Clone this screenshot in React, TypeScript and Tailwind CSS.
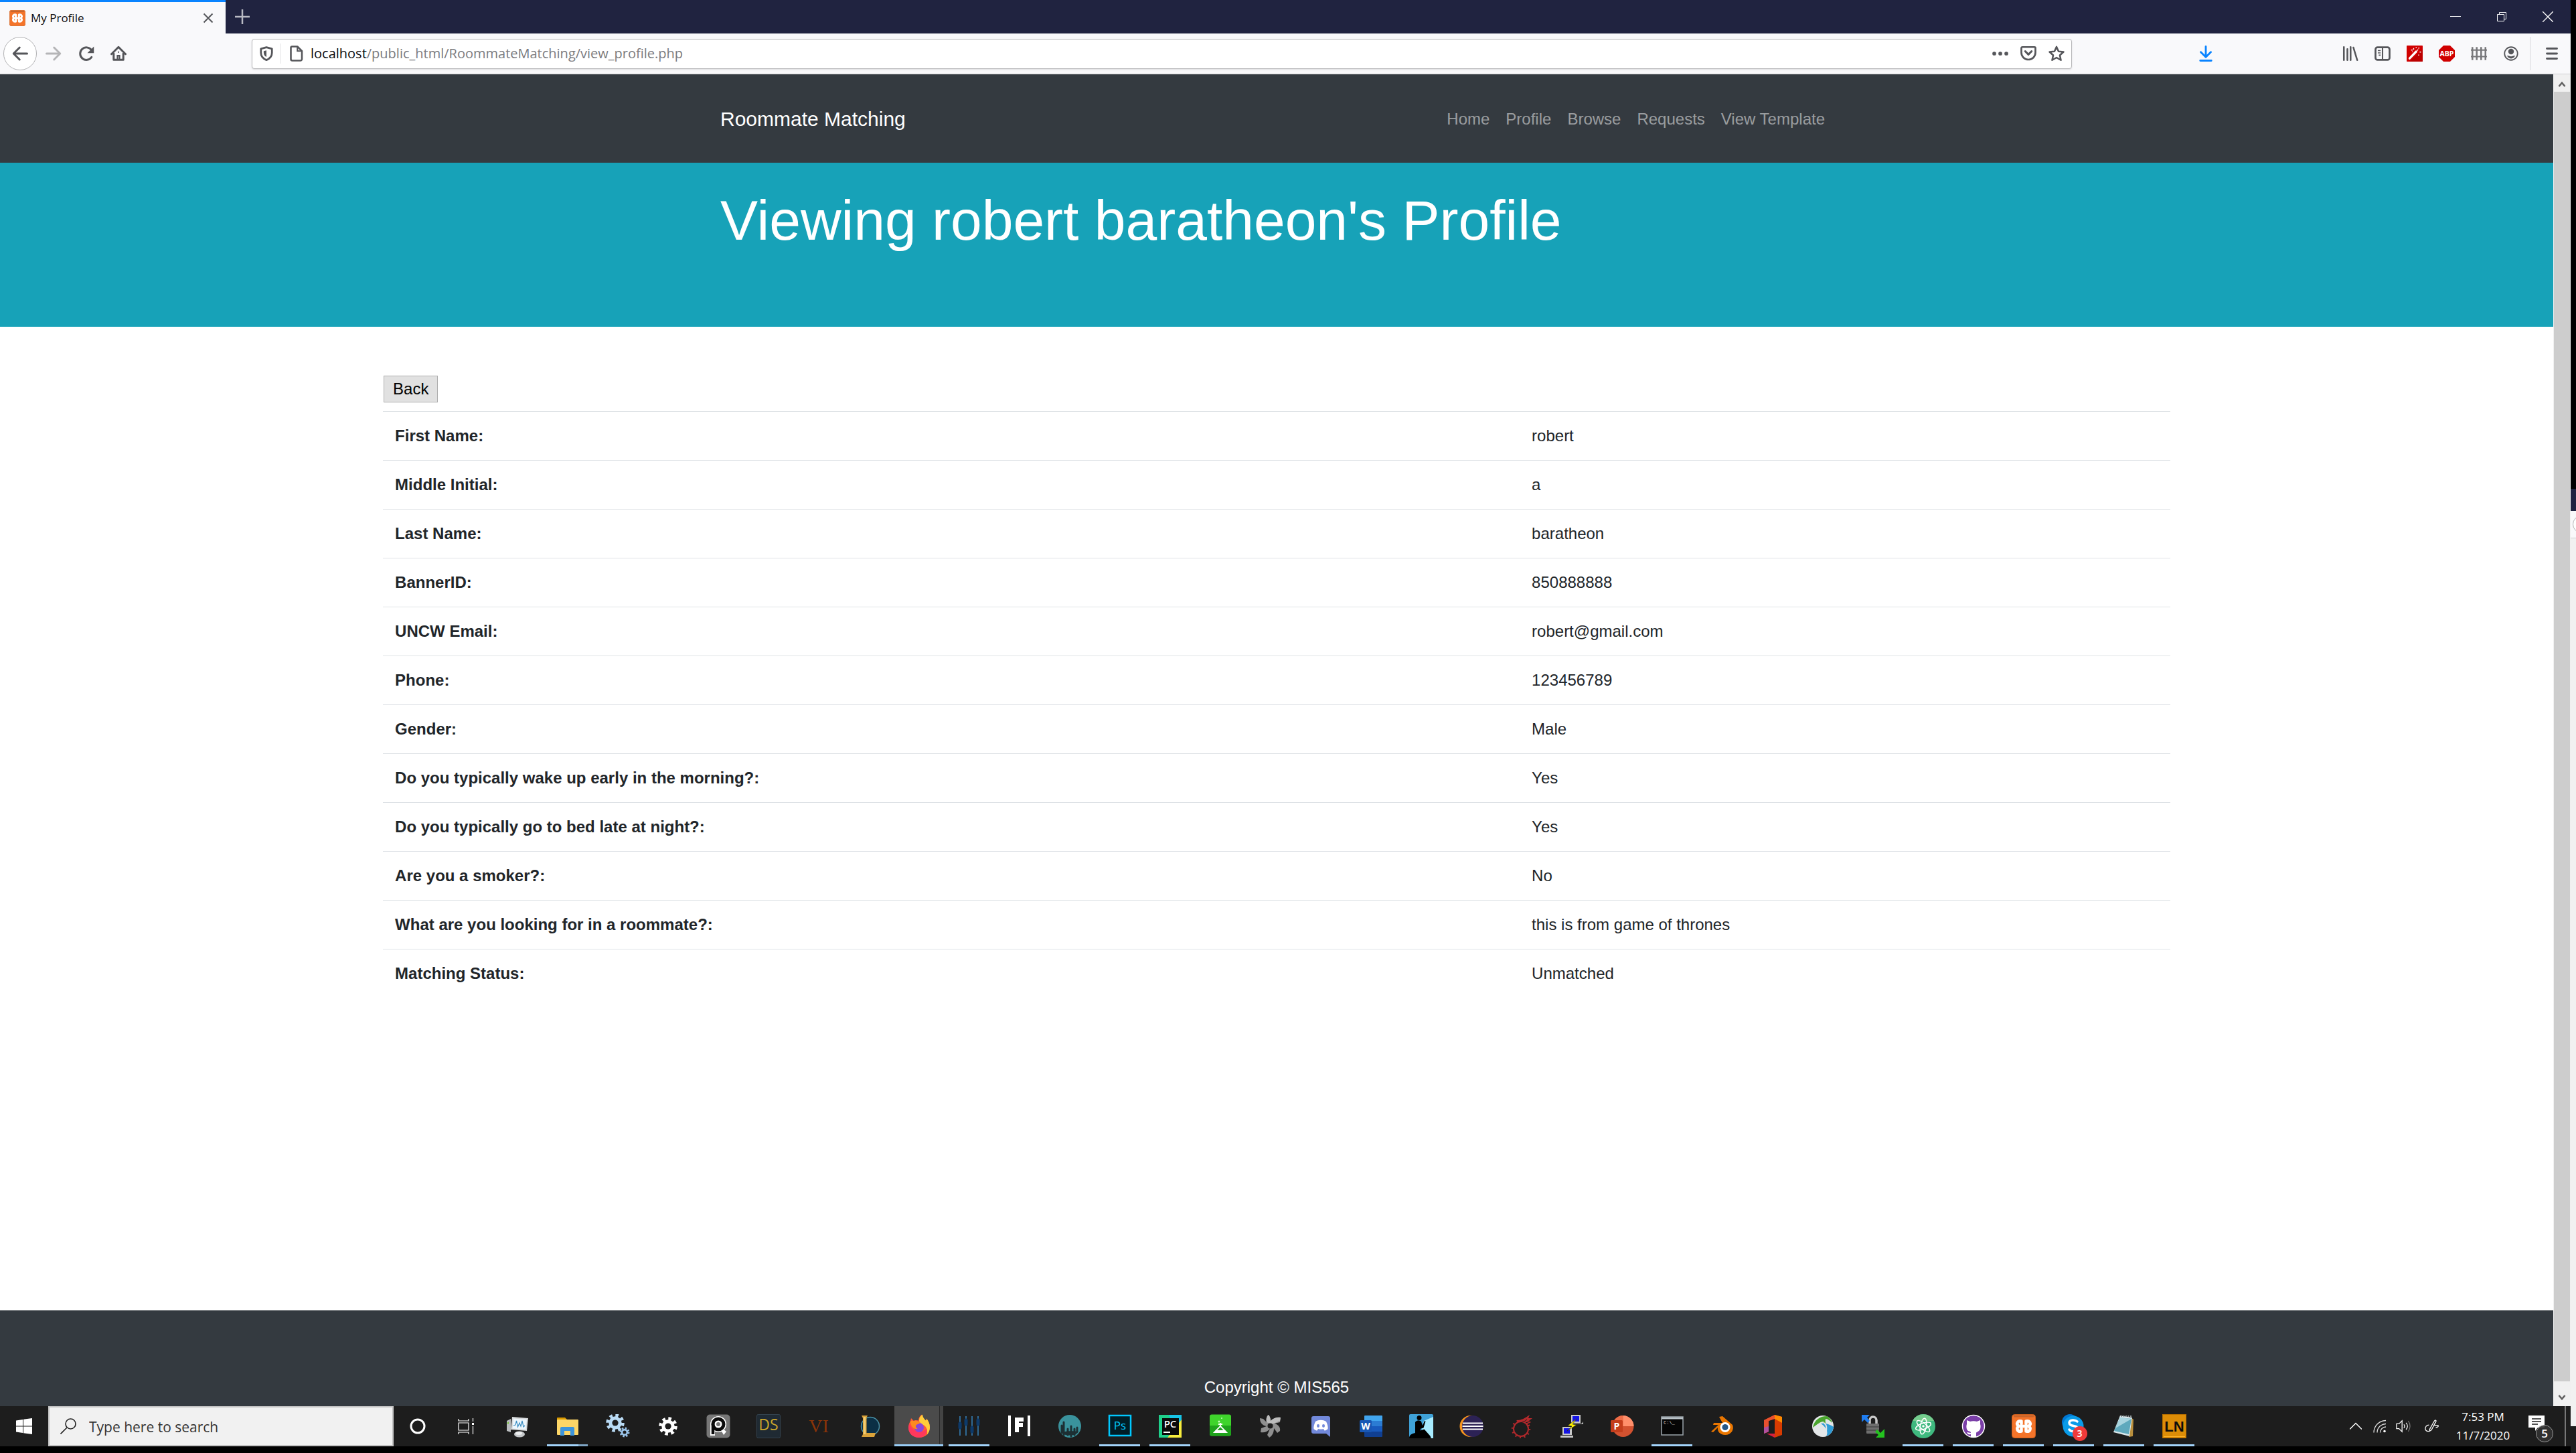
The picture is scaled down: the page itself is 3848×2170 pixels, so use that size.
import React from "react";
import type { ReactNode } from "react";

const ink = "#55565a";

/* ---------- browser icons ---------- */

function Svg({ children, size = "size-6", box = "0 0 16 16" }: { children: ReactNode; size?: string; box?: string }) {
  return (
    <svg viewBox={box} className={`${size} shrink-0`} fill="none" aria-hidden="true">
      {children}
    </svg>
  );
}

function XamppLogo({ size = "size-6" }: { size?: string }) {
  return (
    <Svg size={size} box="0 0 36 36">
      <rect x="0.5" y="0.5" width="35" height="35" rx="4" fill="#f4742a" stroke="#c95d1c" />
      <rect x="3" y="1.500" width="30" height="3" rx="1" fill="#c9652b" />
      <path
        d="M14.500 10.500c-5.500-1.500-8.500 4-4 7.500-4.500 3.500-1.500 9 4 7.500M21.500 10.500c5.500-1.500 8.500 4 4 7.500 4.500 3.500 1.500 9-4 7.500M14.500 10.500v4M21.500 10.500v4M14.500 21.500v4M21.500 21.500v4M11 18h14"
        stroke="#fff"
        strokeWidth="4.500"
        strokeLinecap="round"
        strokeLinejoin="round"
      />
    </Svg>
  );
}

const BackIcon = () => (
  <Svg>
    <path d="M15 8H2M7.500 2 1.500 8l6 6" stroke={ink} strokeWidth="2" strokeLinecap="round" strokeLinejoin="round" />
  </Svg>
);
const ForwardIcon = () => (
  <Svg>
    <path d="M1 8h13M8.500 2l6 6-6 6" stroke="#b5b5b7" strokeWidth="2" strokeLinecap="round" strokeLinejoin="round" />
  </Svg>
);
const ReloadIcon = () => (
  <Svg>
    <path d="M13.200 11.500A6.200 6.200 0 1 1 13 4.400" stroke={ink} strokeWidth="2" strokeLinecap="round" />
    <path d="M15.500 1v6.500H9z" fill={ink} />
  </Svg>
);
const HomeIcon = () => (
  <Svg>
    <path d="M1 8.500 8 1.500l7 7M3.200 8v6.200h9.600V8" stroke={ink} strokeWidth="2" strokeLinecap="round" strokeLinejoin="round" />
    <path d="M7 14v-4h2v4" stroke={ink} strokeWidth="1.500" />
    <path d="M8 6.500h.01" stroke={ink} strokeWidth="1.500" strokeLinecap="round" />
  </Svg>
);
const ShieldIcon = () => (
  <Svg size="size-[22px]">
    <path d="M8 1.200 14 2.800V7c0 4-2.500 6.500-6 8-3.500-1.500-6-4-6-8V2.800z" stroke={ink} strokeWidth="2" strokeLinejoin="round" />
    <path d="M8 4.500v7.200C6 10.500 5 9 5 7V5.300z" fill={ink} />
  </Svg>
);
const PageIcon = () => (
  <Svg>
    <path d="M4 1h5.500L14 5.500V13.500a1.500 1.500 0 0 1-1.500 1.500h-8A1.500 1.500 0 0 1 3 13.500V2a1 1 0 0 1 1-1z" stroke={ink} strokeWidth="1.700" strokeLinejoin="round" />
    <path d="M9.500 1v4.500H14" stroke={ink} strokeWidth="1.400" />
  </Svg>
);
const DotsIcon = () => (
  <Svg>
    <circle cx="2" cy="8" r="1.900" fill={ink} />
    <circle cx="8" cy="8" r="1.900" fill={ink} />
    <circle cx="14" cy="8" r="1.900" fill={ink} />
  </Svg>
);
const PocketIcon = () => (
  <Svg>
    <path d="M2 1.500h12a1 1 0 0 1 1 1V7A7 7 0 0 1 1 7V2.500a1 1 0 0 1 1-1z" stroke={ink} strokeWidth="1.800" />
    <path d="M4.800 5.700 8 8.900l3.200-3.200" stroke={ink} strokeWidth="2" strokeLinecap="round" strokeLinejoin="round" />
  </Svg>
);
const StarIcon = () => (
  <Svg>
    <path d="M8 1.300l2.050 4.500 4.900.55-3.650 3.300 1.050 4.850L8 12l-4.350 2.500L4.700 9.650 1.050 6.350l4.900-.55z" stroke={ink} strokeWidth="1.700" strokeLinejoin="round" />
  </Svg>
);
const DownloadIcon = () => (
  <Svg>
    <path d="M8 1v10M3 6.500 8 11.500l5-5M2.500 15h11" stroke="#0a84ff" strokeWidth="1.900" strokeLinecap="round" strokeLinejoin="round" />
  </Svg>
);
const LibraryIcon = () => (
  <Svg>
    <path d="M1.500 1.500v13M5 3.500v11M8.200 1.500v13M11 2l3.800 12.500" stroke={ink} strokeWidth="1.700" strokeLinecap="round" />
  </Svg>
);
const SidebarIcon = () => (
  <Svg>
    <rect x="1" y="1.800" width="14" height="12.500" rx="2" stroke={ink} strokeWidth="1.800" />
    <path d="M8 2v12" stroke={ink} strokeWidth="1.400" />
    <path d="M3.300 5h2.800M3.300 7.300h2.800M4.200 9.600h1.900" stroke={ink} strokeWidth="1.100" />
  </Svg>
);
const WandIcon = () => (
  <Svg>
    <rect width="16" height="16" rx="0.500" fill="#d00000" />
    <path d="M3 16 16 4v12z" fill="#a80000" opacity=".5" />
    <path d="M3 12.800 9.500 6" stroke="#fff" strokeWidth="2.200" strokeLinecap="round" />
    <path d="M10.500 5l1-1M7 2.500v1.600M4.500 4.500h1.400M9.500 1.500v1M12.500 2.200l-.8.800M13 6.500h1.300M12 9v1M5.500 6.500l.5-.5" stroke="#fff" strokeWidth="0.900" />
  </Svg>
);
const AbpIcon = () => (
  <Svg>
    <path d="M4.700 0h6.600L16 4.700v6.600L11.300 16H4.700L0 11.300V4.700z" fill="#d00000" />
    <text x="8" y="10.600" textAnchor="middle" fontSize="7" fontWeight="700" fill="#fff" fontFamily="Open Sans, sans-serif">
      ABP
    </text>
  </Svg>
);
const FenceIcon = () => (
  <Svg>
    <path d="M1.500 1.500v13M5.800 1.500v13M10.200 1.500v13M14.500 1.500v13" stroke="#77777a" strokeWidth="1.700" />
    <path d="M0 4.500h16M0 11h16" stroke="#77777a" strokeWidth="1.300" />
  </Svg>
);
const AccountIcon = () => (
  <Svg>
    <circle cx="8" cy="8" r="6.500" stroke={ink} strokeWidth="1.200" />
    <circle cx="8" cy="6" r="2.800" fill={ink} />
    <path d="M4 10.200c1.200-.6 1.800.6 4 .6s2.800-1.200 4-.6A5 5 0 0 1 8 13a5 5 0 0 1-4-2.800z" fill={ink} />
  </Svg>
);
const MenuIcon = () => (
  <Svg size="size-5">
    <path d="M2 2h12M2 8h12M2 14h12" stroke={ink} strokeWidth="2.300" strokeLinecap="round" />
  </Svg>
);

/* ---------- taskbar icons ---------- */

const sans = "Open Sans, sans-serif";

const gear = (cx: number, cy: number, r: number, color: string, hole: string) => (
  <g>
    <circle cx={cx} cy={cy} r={r} stroke={color} strokeWidth={r * 0.5} strokeDasharray={`${r * 0.393} ${r * 0.3924}`} />
    <circle cx={cx} cy={cy} r={r * 0.88} fill={color} />
    <circle cx={cx} cy={cy} r={r * 0.42} fill={hole} />
  </g>
);

const art: Record<string, ReactNode> = {
  Monitor: (
    <>
      <path d="M2 10l6-3v20l-6-2z" fill="#b9bcbe" />
      <path d="M3 12l2-.5v3l-2 .5z" fill="#7ac142" />
      <path d="M10 4l24 2-2 19-24-2z" fill="#d6d9db" />
      <path d="M12 6.500l20 1.500-1.500 15-20-1.500z" fill="#eef7fd" />
      <path d="M12 17l3-1 1.500-6 2 9 2.500-6 2 5 2-8 2 9 2-2" stroke="#3c8fc4" strokeWidth="1.200" />
      <ellipse cx="21" cy="30" rx="8" ry="4.500" fill="#c6c9cb" />
      <ellipse cx="20" cy="28.500" rx="5" ry="2.500" fill="#eceeef" />
    </>
  ),
  Explorer: (
    <>
      <path d="M2 6a1 1 0 0 1 1-1h11l3 3v4H2z" fill="#d99a00" />
      <rect x="2" y="8" width="32" height="23" rx="1" fill="#fdd667" />
      <path d="M7 32V21a2 2 0 0 1 2-2h17a2 2 0 0 1 2 2v11h-6v-7h-9v7z" fill="#3d94db" />
    </>
  ),
  Gears: (
    <>
      {gear(14, 13, 11, "#b9dbf5", "#1d1d1d")}
      {gear(28, 27, 6, "#9cc6ec", "#1d1d1d")}
    </>
  ),
  Settings: gear(18, 18, 11, "#ffffff", "#1d1d1d"),
  Player: (
    <>
      <rect x="0.500" y="0.500" width="35" height="35" rx="5" fill="#777" />
      <circle cx="18" cy="15" r="12" fill="#fff" />
      <path d="M6 15h7v17H6z" fill="#fff" />
      <path d="M22 24l3-2 5 4-4 5z" fill="#fff" />
      <circle cx="18" cy="15" r="8" stroke="#0a0a0a" strokeWidth="5" />
      <path d="M10 14v16" stroke="#0a0a0a" strokeWidth="4.500" />
      <circle cx="18" cy="15" r="4" fill="#777" stroke="#fff" strokeWidth="2" />
    </>
  ),
  DS: (
    <>
      <rect x="0.500" y="0.500" width="35" height="35" rx="2" fill="#1f2a33" stroke="#33424e" />
      <text x="18" y="24" textAnchor="middle" fontSize="23" fill="#c9a62c" fontFamily={sans}>
        DS
      </text>
    </>
  ),
  VI: (
    <text x="18" y="27" textAnchor="middle" fontSize="28" fill="#8a3408" fontFamily="Liberation Serif, serif">
      VI
    </text>
  ),
  League: (
    <>
      <circle cx="20" cy="18" r="13.500" fill="#0b2f45" stroke="#4a8fa4" strokeWidth="1.500" />
      <path d="M7 2h9l-1.500 3v23H28l-2 6H7l2-4V6z" fill="#d9a23a" />
      <path d="M10 4h3v26h-3z" fill="#f1cd73" />
    </>
  ),
  Firefox: (
    <>
      <path d="M18 35C8.500 35 2 28.500 2 20c0-5 2-8 3-10l1-4 4 4c2-1.500 5-1 7-.500 0-4 2-7 5-9 .5 4 3 6 6 9 1-1 1-2 1-3 3 4 5 8 5 13C34 28.500 27.500 35 18 35z" fill="#ff5a36" />
      <path d="M23 .5c.5 4 2 6 5 9 1-1 1-2 1-3 3 4 5 8 5 13 0 4-1.500 8-4 11 1-9-2-13-7-15-3-1.500-5-3-5-6 0-4 2-7 5-9z" fill="#ffcd3a" />
      <path d="M4 14c3 12 16 16 26 8-1 9-6 13-12 13C9 35 2 29 2 20c0-2 1-4 2-6z" fill="#ff2d6a" opacity=".75" />
      <circle cx="18" cy="20" r="7" fill="#8a46d8" />
      <path d="M5 10l5 0c4-1 6 1 10 2-1 3-4 2-6 4-2 1-1 5 2 6-6 1-11-4-11-12z" fill="#ff8a1f" />
    </>
  ),
  Mixer: (
    <>
      <path d="M4 3v29M13 3v29M22 3v29M31 3v29" stroke="#2f6a96" strokeWidth="2" />
      <path d="M4 14v6M13 9v6M22 20v6M31 9v6" stroke="#0d3a6b" strokeWidth="5" strokeLinecap="round" />
    </>
  ),
  Framer: (
    <>
      <path d="M3 2v31M32 2v31" stroke="#fff" strokeWidth="4" />
      <path d="M14 5v22M12 8h12M12 16h11" stroke="#fff" strokeWidth="6" />
    </>
  ),
  Cactus: (
    <>
      <circle cx="18" cy="18" r="17" fill="#3a929c" />
      <path d="M6 28V17M9 31V12M15 31v-9M20 33V18M25 31V22M29 26v-6" stroke="#1d2f33" strokeWidth="3" strokeLinecap="round" />
      <path d="M6 27c6-2 18-2 25-1-3 5-8 5.500-13 5.500S9 31 6 27z" fill="#1d2f33" />
    </>
  ),
  Photoshop: (
    <>
      <rect x="2" y="2" width="32" height="30" fill="#001d26" stroke="#00c8ff" strokeWidth="2.500" />
      <text x="18" y="23" textAnchor="middle" fontSize="17" fill="#00c8ff" fontFamily={sans}>
        Ps
      </text>
    </>
  ),
  PyCharm: (
    <>
      <path d="M1 1h34v34H1z" fill="#1fd08b" />
      <path d="M16 1h19v20L20 10z" fill="#17c4e6" />
      <path d="M35 8v27H14z" fill="#f6ec3d" />
      <rect x="6" y="6" width="25" height="25" fill="#0a0a0a" />
      <text x="18" y="20" textAnchor="middle" fontSize="15" fontWeight="600" fill="#fff" fontFamily={sans}>
        PC
      </text>
      <path d="M8 27h10" stroke="#fff" strokeWidth="2" />
    </>
  ),
  Flask: (
    <>
      <rect x="2" y="0.500" width="32" height="32" rx="3" fill="#3fd42c" />
      <path d="M2 17h32v12.500a3 3 0 0 1-3 3H5a3 3 0 0 1-3-3z" fill="#1fa31c" />
      <path d="M18 13v5L9 27h18l-9-9M15 15h6" stroke="#fff" strokeWidth="1.800" />
      <path d="M11 24h14l3 4H8z" fill="#fff" />
      <circle cx="16" cy="11" r="1.500" fill="#c8ffc0" />
      <circle cx="20" cy="6" r="1" fill="#c8ffc0" />
    </>
  ),
  Aperture: (
    <>
      <path d="M15 1c2 3 3 5 3 9 4-4 9-6 15-5l-1 7-8 2c6 2 9 6 8 11l-4 3-5-7c0 6-2 11-7 14l-3-4 4-9c-5 5-9 6-14 5l1-6 8-3C6 17 2 13 2 6l5 1 5 5c-1-5 0-9 3-11z" fill="#8f8f8f" />
      <path d="M15 1c2 3 3 5 3 9 4-4 9-6 15-5l-1 5-12 5-8-3c-1-5 0-9 3-11z" fill="#bcbcbc" />
      <circle cx="17.500" cy="17.500" r="4" fill="#1d1d1d" />
    </>
  ),
  Discord: (
    <>
      <path d="M7 3h22a3 3 0 0 1 3 3v28l-6-5H7a3 3 0 0 1-3-3V6a3 3 0 0 1 3-3z" fill="#7289da" />
      <path d="M10 11c5-3 11-3 16 0 2 4 3 8 2.500 11-2 2-4 2.500-5 2.500l-1.500-2.500c-3 .8-5 .8-8 0l-1.500 2.500c-1 0-3-.5-5-2.500C7 19 8 15 10 11z" fill="#fff" />
      <ellipse cx="14" cy="17.500" rx="2" ry="2.400" fill="#7289da" />
      <ellipse cx="22" cy="17.500" rx="2" ry="2.400" fill="#7289da" />
    </>
  ),
  Word: (
    <>
      <path d="M9 2h25a1 1 0 0 1 1 1v7H8V3a1 1 0 0 1 1-1z" fill="#41a5ee" />
      <path d="M8 10h27v8H8z" fill="#2b7cd3" />
      <path d="M8 18h27v8H8z" fill="#185abd" />
      <path d="M8 26h27v7a1 1 0 0 1-1 1H9a1 1 0 0 1-1-1z" fill="#103f91" />
      <rect x="1" y="9" width="18" height="18" rx="1.500" fill="#1857b4" />
      <text x="10" y="23" textAnchor="middle" fontSize="14" fontWeight="700" fill="#fff" fontFamily={sans}>
        W
      </text>
    </>
  ),
  Kindle: (
    <>
      <rect width="36" height="36" rx="2" fill="#3fa2d8" />
      <path d="M16 36 22 10 36 4v32z" fill="#a8ecff" />
      <circle cx="15" cy="5.500" r="3.500" fill="#000" />
      <path d="M9 12c3-4 7-3 9-1l2 6 3-7 1.500.5-3 10-4 1-1 3 6-2 8 9c2 2 2 4.500 2 4.500H0c0-5 4-7 9-8z" fill="#000" />
    </>
  ),
  Eclipse: (
    <>
      <circle cx="16.500" cy="18" r="16" fill="#f7941e" />
      <circle cx="20" cy="18" r="16" fill="#2c2255" />
      <path d="M5 13.500h30M4.500 18h31M5 22.500h30" stroke="#fff" strokeWidth="2.200" />
    </>
  ),
  Meteor: (
    <>
      <circle cx="17" cy="22" r="11" stroke="#b4292c" strokeWidth="2" />
      <circle cx="17" cy="22" r="13" stroke="#b4292c" strokeWidth="2.500" strokeDasharray="2 4.800" />
      <path d="M12 9c7 0 12-4 18-8l-2 5 6 0-5 4 3 2-6 3c-3-3-8-4-14-4z" fill="#b4292c" />
      <path d="M17 13c3-2 6-2 9-5M24 13l6-2" stroke="#1d1d1d" />
    </>
  ),
  Putty: (
    <>
      <path d="M17 1h14v12H17zM15 14h18l2-3v4h-20z" fill="#c9c9c9" />
      <path d="M19 3h10v8H19z" fill="#1414e6" />
      <path d="M4 19h14v12H4zM1 32h19v3H1z" fill="#c9c9c9" />
      <path d="M6 21h9v8H6z" fill="#1414e6" />
      <path d="M25 7 12 17l6 1-7 7 14-9-6-1z" fill="#fff200" stroke="#222" strokeWidth=".6" />
    </>
  ),
  PowerPoint: (
    <>
      <circle cx="19.500" cy="18" r="16" fill="#d35230" />
      <path d="M19.500 2a16 16 0 0 0-16 16h16z" fill="#ed6c47" />
      <path d="M19.500 2a16 16 0 0 1 16 16h-16z" fill="#ff8f6b" />
      <rect x="1" y="9" width="18" height="18" rx="1.500" fill="#c43e1c" />
      <text x="10" y="23" textAnchor="middle" fontSize="14" fontWeight="700" fill="#fff" fontFamily={sans}>
        P
      </text>
    </>
  ),
  Terminal: (
    <>
      <rect x="2" y="4" width="32" height="27" fill="#050505" stroke="#9aa4ab" strokeWidth="1.500" />
      <path d="M2 6h32" stroke="#b9c2c8" strokeWidth="3" />
      <text x="5" y="15" fontSize="7" fill="#ddd" fontFamily="Liberation Mono, monospace">
        C:\_
      </text>
    </>
  ),
  Blender: (
    <>
      <path d="M13 4l5-1 15 13c3 7-2 15-11 15-8 0-12-6-11-11L4 27l-3-1 11-10H4l1-3h13z" fill="#ea7600" />
      <circle cx="22" cy="19.500" r="7.500" fill="#fff" />
      <circle cx="22" cy="19.500" r="4.500" fill="#265787" />
    </>
  ),
  Office: (
    <>
      <path d="M5 9 21 1l11 3v27l-11 4V7l-9 3v16l-7 3z" fill="#d83b01" />
      <path d="M5 9 21 1v6l-9 3v16l-7 3z" fill="#e8502f" />
      <path d="M5 20v9l7-3v-8z" fill="#b04fa0" />
      <path d="M9 29h12v6z" fill="#d8203c" />
      <path d="M21 1l11 3v9L21 7z" fill="#ff8a00" />
    </>
  ),
  Swirl: (
    <>
      <circle cx="18" cy="18" r="16" fill="#e3e6e8" />
      <path d="M3 20C5 9 13 3 24 3c4 2 7 6 8 10-3-3-7-6-10-6-1 4 0 7 2 11-2-1-4-4-5-7-5 0-9 4-16 9z" fill="#4aa52e" />
      <path d="M15 14c7-1 13 1 19 5-1 7-5 12-11 14 3-5 2-12-8-19z" fill="#2f9bd6" />
      <path d="M20 13c4 4 4 10 2 15" stroke="#e3e6e8" strokeWidth="2" />
    </>
  ),
  Lock: (
    <>
      <path d="M13 15V9a5 5 0 0 1 10 0v6" stroke="#c9c9c9" strokeWidth="3.500" />
      <rect x="8" y="14" width="19" height="15" rx="1" fill="#6f6f6f" />
      <path d="M8 19h19M8 24h19" stroke="#4a4a4a" strokeWidth="1.500" />
      <path d="M1 1h12l-4 4 4 5-3 3-5-5-4 4z" fill="#1e7cf0" />
      <path d="M35 35H22l4-4-5-5 3-3 5 5 6-6z" fill="#24c21f" />
    </>
  ),
  Atom: (
    <>
      <circle cx="18" cy="18" r="18" fill="#3fb97f" />
      <path d="M2 10a18 18 0 0 1 32 0z" fill="#8fd694" opacity=".7" />
      <ellipse cx="18" cy="18" rx="12" ry="4.500" stroke="#fff" strokeWidth="1.500" transform="rotate(-20 18 18)" />
      <ellipse cx="18" cy="18" rx="12" ry="4.500" stroke="#fff" strokeWidth="1.500" transform="rotate(40 18 18)" />
      <ellipse cx="18" cy="18" rx="12" ry="4.500" stroke="#fff" strokeWidth="1.500" transform="rotate(100 18 18)" />
      <circle cx="18" cy="18" r="1.800" fill="#fff" />
    </>
  ),
  GitHub: (
    <>
      <circle cx="18" cy="18" r="16.500" fill="#7b3fa8" stroke="#fff" strokeWidth="1.500" />
      <path d="M8 9l5 2a18 18 0 0 1 10 0l5-2v6c1 2 1 8-2 10-2 1.500-4 2-4 3v6h-8v-4c-4 1-5-1-6-3 2 0 3 1 6 1 0-2-1-2-4-3-3-2-3-8-2-10z" fill="#fff" />
    </>
  ),
  Skype: (
    <>
      <circle cx="12" cy="12" r="12" fill="#0078d4" />
      <circle cx="17" cy="18" r="15.500" fill="#0a9be8" />
      <path d="M23 11c-3-3-12-3-12 2 0 6 13 3 13 9 0 5-10 5-13 1" stroke="#fff" strokeWidth="3.500" strokeLinecap="round" />
    </>
  ),
  Notepad: (
    <>
      <path d="M28 5l4 3-1 25-6 1z" fill="#b98f3d" />
      <path d="M12 2l18 3-4 28-24-6z" fill="#d9e6ea" />
      <path d="M12 5l17 2-4 23-22-5z" fill="#5fa9bd" />
      <path d="M12 5l17 2-24 14z" fill="#a8d4df" />
      <path d="M13 3h16" stroke="#8f9799" strokeWidth="2" strokeDasharray="2 1.500" />
    </>
  ),
  LN: (
    <>
      <rect x="0.500" y="0.500" width="35" height="35" fill="#dd8d07" stroke="#b66f00" />
      <path d="M2 33.500h32" stroke="#ffb62b" />
      <text x="18" y="26" textAnchor="middle" fontSize="22" fontWeight="700" fill="#0c0c0c" fontFamily="Liberation Sans, sans-serif">
        LN
      </text>
    </>
  ),
};

type App = { name: string; state?: "open" | "active" | "stacked"; badge?: string };

const apps: App[] = [
  { name: "Monitor" },
  { name: "Explorer", state: "stacked" },
  { name: "Gears" },
  { name: "Settings" },
  { name: "Player" },
  { name: "DS" },
  { name: "VI" },
  { name: "League" },
  { name: "Firefox", state: "active" },
  { name: "Mixer", state: "open" },
  { name: "Framer" },
  { name: "Cactus" },
  { name: "Photoshop", state: "open" },
  { name: "PyCharm", state: "open" },
  { name: "Flask" },
  { name: "Aperture" },
  { name: "Discord" },
  { name: "Word" },
  { name: "Kindle" },
  { name: "Eclipse" },
  { name: "Meteor" },
  { name: "Putty" },
  { name: "PowerPoint" },
  { name: "Terminal", state: "open" },
  { name: "Blender" },
  { name: "Office" },
  { name: "Swirl" },
  { name: "Lock" },
  { name: "Atom", state: "open" },
  { name: "GitHub", state: "open" },
  { name: "Xampp", state: "open" },
  { name: "Skype", state: "open", badge: "3" },
  { name: "Notepad", state: "open" },
  { name: "LN", state: "open" },
];

const profile: [string, string][] = [
  ["First Name:", "robert"],
  ["Middle Initial:", "a"],
  ["Last Name:", "baratheon"],
  ["BannerID:", "850888888"],
  ["UNCW Email:", "robert@gmail.com"],
  ["Phone:", "123456789"],
  ["Gender:", "Male"],
  ["Do you typically wake up early in the morning?:", "Yes"],
  ["Do you typically go to bed late at night?:", "Yes"],
  ["Are you a smoker?:", "No"],
  ["What are you looking for in a roommate?:", "this is from game of thrones"],
  ["Matching Status:", "Unmatched"],
];

const links = ["Home", "Profile", "Browse", "Requests", "View Template"];

function TabStrip() {
  return (
    <div className="flex h-[50px] shrink-0 items-stretch bg-[#202340]">
      <div className="flex w-[337px] items-center border-t-3 border-[#0a84ff] bg-[#f9f9fb] px-[14px]">
        <XamppLogo />
        <span className="ml-2 flex-1 text-[17px] text-[#0c0c0d]">My Profile</span>
        <button aria-label="Close tab" className="flex size-6 items-center justify-center">
          <Svg size="size-4">
            <path d="M1.500 1.500l13 13M14.500 1.500l-13 13" stroke={ink} strokeWidth="2" />
          </Svg>
        </button>
      </div>
      <button aria-label="New tab" className="flex w-[50px] items-center justify-center">
        <Svg size="size-[22px]">
          <path d="M8 0v16M0 8h16" stroke="#b9bac4" strokeWidth="1.800" />
        </Svg>
      </button>
      <div className="ml-auto flex">
        <button aria-label="Minimize" className="flex w-[69px] items-center justify-center">
          <Svg size="size-4">
            <path d="M0 7.500h16" stroke="#fff" />
          </Svg>
        </button>
        <button aria-label="Restore" className="flex w-[69px] items-center justify-center">
          <Svg size="size-4">
            <path d="M1.500 4.500h10v10h-10zM4.500 4.500v-3h10v10h-3" stroke="#fff" />
          </Svg>
        </button>
        <button aria-label="Close" className="flex w-[69px] items-center justify-center">
          <Svg size="size-4">
            <path d="M0 0l16 16M16 0 0 16" stroke="#fff" strokeWidth="1.300" />
          </Svg>
        </button>
      </div>
    </div>
  );
}

function Toolbar() {
  const extras: [string, ReactNode][] = [
    ["Library", <LibraryIcon />],
    ["Sidebars", <SidebarIcon />],
    ["Magic wand", <WandIcon />],
    ["Adblock Plus", <AbpIcon />],
    ["Fence", <FenceIcon />],
    ["Account", <AccountIcon />],
  ];
  return (
    <div className="flex h-[61px] shrink-0 items-center border-b border-[#d0d0d2] bg-[#f9f9fb] pl-[5px]">
      <button aria-label="Back" className="flex size-[50px] items-center justify-center rounded-full border border-[#b1b1b3] bg-white">
        <BackIcon />
      </button>
      <button aria-label="Forward" className="flex h-12 w-[50px] items-center justify-center">
        <ForwardIcon />
      </button>
      <button aria-label="Reload" className="flex size-12 items-center justify-center">
        <ReloadIcon />
      </button>
      <button aria-label="Home" className="flex size-12 items-center justify-center">
        <HomeIcon />
      </button>
      <label className="ml-[175px] flex h-[45px] flex-1 items-center rounded-sm border border-[#b8b8ba] bg-white shadow-sm">
        <span className="flex w-[42px] items-center justify-center border-r border-[#e2e2e4] py-1">
          <ShieldIcon />
        </span>
        <span className="flex w-[45px] items-center justify-center">
          <PageIcon />
        </span>
        <span className="relative flex-1 text-[20px] leading-7">
          <span aria-hidden="true" className="whitespace-nowrap text-[#7b7b7e]">
            <span className="text-[#0c0c0d]">localhost</span>/public_html/RoommateMatching/view_profile.php
          </span>
          <input
            aria-label="Address"
            defaultValue="localhost/public_html/RoommateMatching/view_profile.php"
            className="absolute inset-0 w-full bg-transparent text-transparent outline-none"
          />
        </span>
        <span className="flex items-center gap-[18px] pr-[10px]">
          <DotsIcon />
          <PocketIcon />
          <StarIcon />
        </span>
      </label>
      <button aria-label="Downloads" className="ml-[176px] flex size-12 items-center justify-center">
        <DownloadIcon />
      </button>
      <div className="ml-[168px] flex items-center">
        {extras.map(([name, icon]) => (
          <button key={name} aria-label={name} className="flex size-12 items-center justify-center">
            {icon}
          </button>
        ))}
      </div>
      <button aria-label="Menu" className="ml-1 flex h-[50px] w-[61px] items-center justify-center border-l border-[#d7d7db] pl-1">
        <MenuIcon />
      </button>
    </div>
  );
}

function Site() {
  return (
    <div className="flex min-w-0 flex-1 flex-col overflow-hidden bg-white font-['Liberation_Sans',Arial,sans-serif] text-2xl leading-9 text-[#212529]">
      <header className="bg-[#343a40] pt-[37px] pb-[35px]">
        <nav className="mx-auto flex w-full max-w-[1710px] items-center justify-between px-6 py-3">
          <a href="#home" className="text-[30px] text-white">
            Roommate Matching
          </a>
          <ul className="flex">
            {links.map((l) => (
              <li key={l}>
                <a href="#nav" className="px-3 text-white/50">
                  {l}
                </a>
              </li>
            ))}
          </ul>
        </nav>
      </header>
      <section className="bg-[#17a2b8] pt-9 pb-[108px]">
        <h1 className="mx-auto w-full max-w-[1710px] px-6 text-[84px] leading-[101px] font-light text-white">
          Viewing robert baratheon's Profile
        </h1>
      </section>
      <main className="mx-auto w-[70%] flex-1 pt-[73px]">
        <button className="ml-px border border-[#adadad] bg-[#e1e1e1] px-[13px] leading-[38px] text-black">Back</button>
        <table className="mt-[13px] w-full border-collapse text-left">
          <tbody>
            {profile.map(([label, value]) => (
              <tr key={label} className="border-t border-[#dee2e6]">
                <th scope="row" className="w-[1698px] p-[18px] font-bold">
                  {label}
                </th>
                <td className="p-[18px]">{value}</td>
              </tr>
            ))}
          </tbody>
        </table>
      </main>
      <footer className="bg-[#343a40] pt-[97px] pb-[10px] text-center text-white">Copyright © MIS565</footer>
    </div>
  );
}

function Scrollbar() {
  return (
    <div className="flex w-[26px] shrink-0 flex-col items-stretch bg-[#f0f0f0] px-px">
      <button aria-label="Scroll up" className="flex h-[26px] items-center justify-center pt-1">
        <Svg size="size-3">
          <path d="M2 12l6-7 6 7" stroke="#606060" strokeWidth="3.500" />
        </Svg>
      </button>
      <div className="flex-1 bg-[#cdcdcd]" />
      <button aria-label="Scroll down" className="mt-[11px] flex h-[26px] items-center justify-center">
        <Svg size="size-3">
          <path d="M2 4l6 7 6-7" stroke="#606060" strokeWidth="3.500" />
        </Svg>
      </button>
    </div>
  );
}

function TaskButton({ app }: { app: App }) {
  const active = app.state === "active";
  return (
    <button aria-label={app.name} className="relative flex w-[75px] items-center justify-center">
      {active && (
        <span className="absolute inset-y-0 left-px flex w-[73px] bg-[#4b4b4b]">
          <span className="ml-auto w-1.5 border-l border-[#2a2a2a] bg-[#444]" />
        </span>
      )}
      <span className="relative">
        {app.name === "Xampp" ? (
          <XamppLogo size="size-9" />
        ) : (
          <Svg size="size-9" box="0 0 36 36">
            {art[app.name]}
          </Svg>
        )}
        {app.badge && (
          <span className="absolute -right-0.5 -bottom-1 flex size-[22px] items-center justify-center rounded-full bg-[#f03a3a] text-sm font-semibold text-white">
            {app.badge}
          </span>
        )}
      </span>
      {app.state && (
        <span className={active ? "absolute bottom-0 left-px h-[3px] w-[73px] bg-[#99cdf6]" : "absolute bottom-0 left-[7px] flex h-[3px] w-[61px] bg-[#a3d4fb]"}>
          {app.state === "stacked" && <span className="ml-auto w-3.5 bg-[#7fa5c4]" />}
        </span>
      )}
    </button>
  );
}

function Taskbar() {
  return (
    <div className="flex h-[60px] shrink-0 items-stretch bg-[#1d1d1d] text-white">
      <button aria-label="Start" className="flex w-[72px] items-center justify-center">
        <Svg size="size-6" box="0 0 24 24">
          <path d="M0 3.500 10 2v9.500H0zM11 1.800 24 0v11.500H11zM0 12.500h10V22L0 20.500zM11 12.500h13V24l-13-1.800z" fill="#fff" />
        </Svg>
      </button>
      <label className="flex w-[516px] items-center border-2 border-[#c2c2c2] bg-[#f1f1f1] pl-4">
        <Svg size="size-6" box="0 0 24 24">
          <circle cx="15.500" cy="8.500" r="7.500" stroke="#222" strokeWidth="1.600" />
          <path d="M10 14 0.500 23.500" stroke="#222" strokeWidth="1.600" />
        </Svg>
        <input
          placeholder="Type here to search"
          aria-label="Search"
          className="ml-[19px] min-w-0 flex-1 bg-transparent pt-1 text-[21px] outline-none placeholder:text-[#333]"
        />
      </label>
      <button aria-label="Cortana" className="flex w-[72px] items-center justify-center">
        <Svg size="size-6" box="0 0 24 24">
          <circle cx="12" cy="12" r="10" stroke="#fff" strokeWidth="3" />
        </Svg>
      </button>
      <button aria-label="Task view" className="flex w-[75px] items-center justify-center pr-1">
        <Svg size="size-6" box="0 0 24 24">
          <path d="M1 1v3h15V1M1 7h15v11H1zM1 24v-3h15v3M22.500 0v5M22.500 12v12" stroke="#fff" strokeWidth="1.200" />
          <path d="M21 7h3v3h-3z" fill="#fff" />
        </Svg>
      </button>
      <div className="flex">
        {apps.map((a) => (
          <TaskButton key={a.name} app={a} />
        ))}
      </div>
      <div className="ml-auto flex items-center">
        <button aria-label="Show hidden icons" className="flex w-9 justify-center">
          <Svg size="size-[18px]">
            <path d="M0 12l8-8 8 8" stroke="#fff" strokeWidth="1.400" />
          </Svg>
        </button>
        <button aria-label="Network" className="flex w-9 justify-center">
          <Svg size="size-5" box="0 0 20 20">
            <path d="M1 19.500A18 18 0 0 1 19 1.500M6 19.500a13 13 0 0 1 13-13M10.500 19.500a8.500 8.500 0 0 1 8.500-8.500" stroke="#ddd" strokeWidth="1.300" />
            <circle cx="17" cy="17.500" r="1.800" fill="#fff" />
          </Svg>
        </button>
        <button aria-label="Volume" className="flex w-[34px] justify-center">
          <Svg size="size-[22px]" box="0 0 24 24">
            <path d="M1 8h4l5-5v18l-5-5H1z" stroke="#fff" strokeWidth="1.400" />
            <path d="M13 9c1.500 2 1.500 4 0 6M16.500 6.500c3 3.500 3 7.500 0 11" stroke="#fff" strokeWidth="1.300" />
            <path d="M20 3.500c4 5 4 12 0 17" stroke="#777" strokeWidth="1.300" />
          </Svg>
        </button>
        <button aria-label="Pen" className="ml-1.5 flex w-10 justify-center">
          <Svg size="size-[22px]" box="0 0 24 24">
            <path d="M8 17 16 3c1-1.500 3-.5 2.500 1L11 18l-3 2zM7 10c-4 0-6 3-6 6s3 5 6 4M16 10c2 3 5-1 6 1s-2 3-4 3" stroke="#fff" strokeWidth="1.400" />
          </Svg>
        </button>
        <div className="flex w-[112px] flex-col text-center text-[17px] leading-7">
          <span>7:53 PM</span>
          <span>11/7/2020</span>
        </div>
        <button aria-label="Notifications" className="relative ml-3 flex h-full w-[54px] items-center pb-2.5">
          <Svg size="size-6" box="0 0 24 24">
            <path d="M0 1h24v18H14l-4 5v-5H0z" fill="#fff" />
            <path d="M5 6h14M5 10h14M5 14h9" stroke="#1d1d1d" strokeWidth="1.300" />
          </Svg>
          <span className="absolute top-7 left-[11px] flex size-[26px] items-center justify-center rounded-full border border-[#999] bg-[#333]/90 text-[17px] font-semibold">
            5
          </span>
        </button>
        <button aria-label="Show desktop" className="h-full w-[9px] border-l-2 border-[#777]" />
      </div>
    </div>
  );
}

export default function App() {
  return (
    <div className="flex h-screen overflow-hidden bg-black font-['Open_Sans',sans-serif]">
      <div className="flex min-w-0 flex-1 flex-col pb-2.5">
        <TabStrip />
        <Toolbar />
        <div className="flex min-h-0 flex-1">
          <Site />
          <Scrollbar />
        </div>
        <Taskbar />
      </div>
      <aside aria-label="Neighbouring window" className="flex w-2 shrink-0 flex-col overflow-hidden bg-black">
        <div className="mt-[730px] h-[33px] bg-[#202340]" />
        <div className="flex h-[41px] items-center border-b border-[#d0d0d2] bg-[#f9f9fb] pl-[3px]">
          <span className="size-[26px] shrink-0 rounded-full border border-[#b1b1b3] bg-white" />
        </div>
        <div className="flex-1 bg-[#f1f1f1]" />
        <div className="h-10 bg-[#1d1d1d]" />
      </aside>
    </div>
  );
}
